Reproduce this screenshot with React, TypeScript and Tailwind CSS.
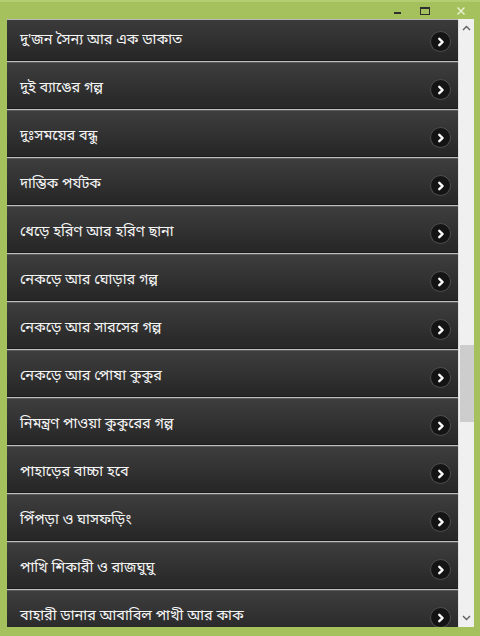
import React from "react";

const items = [
  "দু'জন সৈন্য আর এক ডাকাত",
  "দুই ব্যাঙের গল্প",
  "দুঃসময়ের বন্ধু",
  "দাম্ভিক পর্যটক",
  "ধেড়ে হরিণ আর হরিণ ছানা",
  "নেকড়ে আর ঘোড়ার গল্প",
  "নেকড়ে আর সারসের গল্প",
  "নেকড়ে আর পোষা কুকুর",
  "নিমন্ত্রণ পাওয়া কুকুরের গল্প",
  "পাহাড়ের বাচ্চা হবে",
  "পিঁপড়া ও ঘাসফড়িং",
  "পাখি শিকারী ও রাজঘুঘু",
  "বাহারী ডানার আবাবিল পাখী আর কাক",
];

function Chevron() {
  return (
    <div className="w-[19px] h-[19px] rounded-full bg-[#141414] shadow-[0_0_0_1px_#4a4a4a] flex items-center justify-center">
      <svg width="10" height="10" viewBox="0 0 10 10">
        <path d="M3.3 1.8 L6.6 5 L3.3 8.2" fill="none" stroke="#ffffff" strokeWidth="2.4" strokeLinecap="round" strokeLinejoin="round" />
      </svg>
    </div>
  );
}

export default function App() {
  return (
    <div
      className="w-[480px] h-[636px] bg-[#a5c15d] flex flex-col overflow-hidden"
      style={{ fontFamily: '"Noto Sans Bengali", "Lohit Bengali", "Vrinda", "Noto Sans", sans-serif' }}
    >
      <div className="h-[19px] flex items-start justify-end pr-[14px] relative">
        <div className="absolute left-0 right-0 top-0 h-[2px] bg-[#b4cd70]" />
        <div className="w-[7px] h-[2px] bg-[#2e2e2e] mt-[12px] mr-[19px]" />
        <div className="w-[10px] h-[8px] border border-[#2e2e2e] border-t-2 mt-[7px] mr-[26px]" />
        <svg width="10" height="10" viewBox="0 0 10 10" className="mt-[6px]">
          <path d="M1.5 1.5 L8.5 8.5 M8.5 1.5 L1.5 8.5" stroke="#e8f0cc" strokeWidth="1.5" />
        </svg>
      </div>
      <div className="flex-1 flex pl-[7px] pr-[6px] pb-[9px] min-h-0">
        <div className="flex-1 bg-[#2b2b2b] overflow-hidden border-t border-[#b9b9b9] relative">
          <div className="mt-[-7px] flex flex-col">
            {items.map((t) => (
              <div key={t} className="h-[48px] flex flex-col shrink-0">
                <div className="h-[1px] bg-[#bdbdbd]" />
                <div className="h-[1px] bg-[#5a5a5a]" />
                <div className="flex-1 bg-gradient-to-b from-[#3e3e3e] to-[#262626] flex items-center justify-between pl-[13px] pr-[8px] pt-[8px] border-b border-[#1c1c1c]">
                  <span className="text-[#f5f5f5] text-[14.5px] leading-none">{t}</span>
                  <Chevron />
                </div>
              </div>
            ))}
          </div>
        </div>
        <div className="w-[16px] bg-[#f0f0f0] flex flex-col items-center border-l border-[#e2e2e2]">
          <svg width="9" height="6" viewBox="0 0 9 6" className="mt-[6px]">
            <path d="M1 5 L4.5 1.5 L8 5" fill="none" stroke="#606060" strokeWidth="1.4" />
          </svg>
          <div className="flex-1 w-full relative">
            <div className="absolute left-[1px] right-0 top-[314px] h-[77px] bg-[#cdcdcd]" />
          </div>
          <svg width="9" height="6" viewBox="0 0 9 6" className="mb-[6px]">
            <path d="M1 1 L4.5 4.5 L8 1" fill="none" stroke="#606060" strokeWidth="1.4" />
          </svg>
        </div>
      </div>
    </div>
  );
}
